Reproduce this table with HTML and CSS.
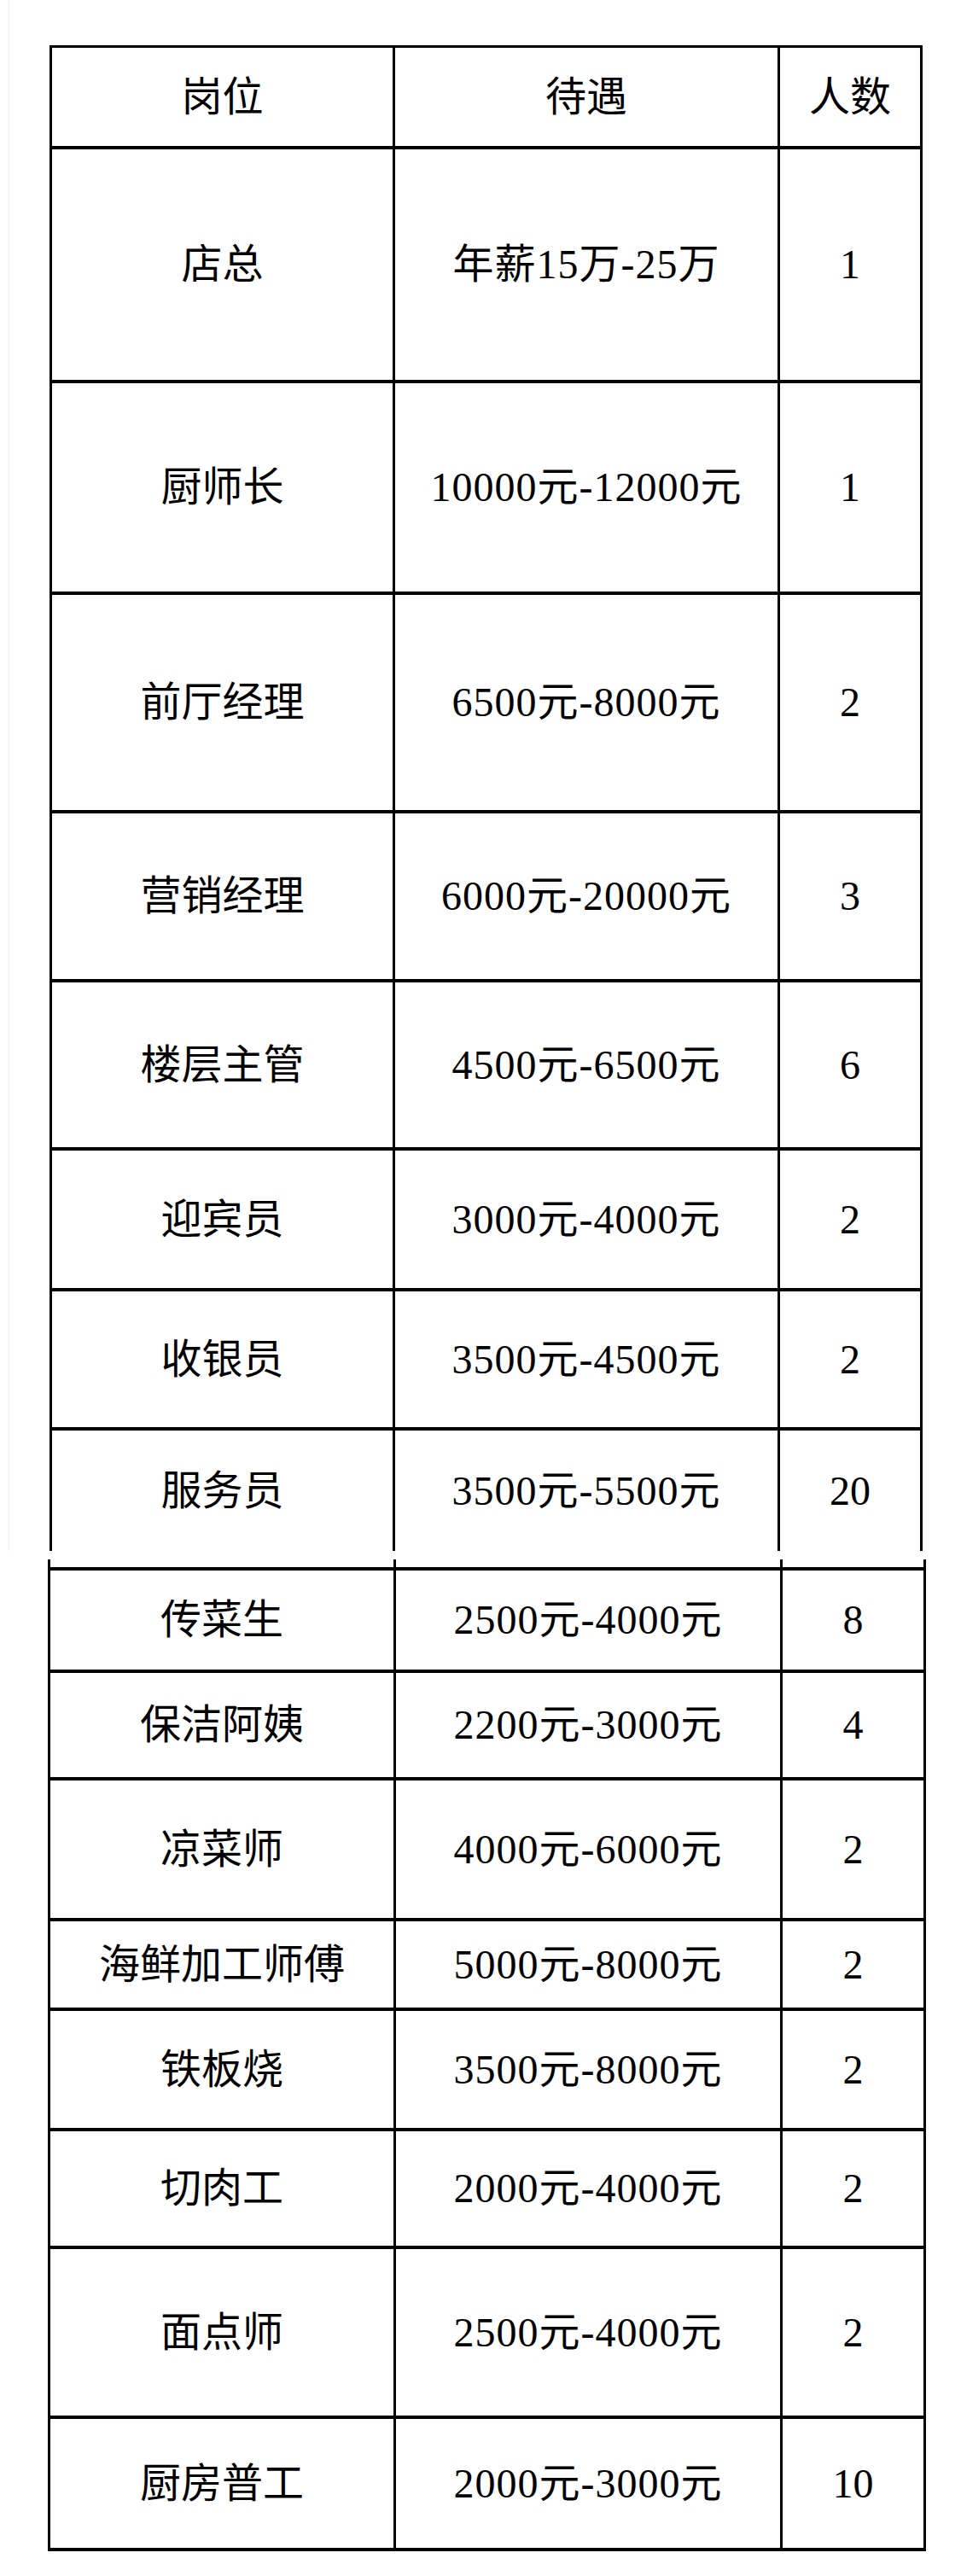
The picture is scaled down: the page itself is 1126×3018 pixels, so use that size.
FILE: index.html
```html
<!DOCTYPE html>
<html lang="zh-CN">
<head>
<meta charset="utf-8">
<title>招聘岗位</title>
<link rel="stylesheet" href="styles.css">
</head>
<body>
<div class="sheet sheet-a">
  <div class="table table-a">
    <div class="row ra0"><div class="cell">岗位</div><div class="cell">待遇</div><div class="cell">人数</div></div>
    <div class="row ra1"><div class="cell">店总</div><div class="cell pay">年薪15万-25万</div><div class="cell">1</div></div>
    <div class="row ra2"><div class="cell">厨师长</div><div class="cell pay">10000元-12000元</div><div class="cell">1</div></div>
    <div class="row ra3"><div class="cell">前厅经理</div><div class="cell pay">6500元-8000元</div><div class="cell">2</div></div>
    <div class="row ra4"><div class="cell">营销经理</div><div class="cell pay">6000元-20000元</div><div class="cell">3</div></div>
    <div class="row ra5"><div class="cell">楼层主管</div><div class="cell pay">4500元-6500元</div><div class="cell">6</div></div>
    <div class="row ra6"><div class="cell">迎宾员</div><div class="cell pay">3000元-4000元</div><div class="cell">2</div></div>
    <div class="row ra7"><div class="cell">收银员</div><div class="cell pay">3500元-4500元</div><div class="cell">2</div></div>
    <div class="row ra8 open"><div class="cell">服务员</div><div class="cell pay">3500元-5500元</div><div class="cell">20</div></div>
  </div>
</div>
<div class="sheet sheet-b">
  <div class="table table-b">
    <div class="row stub"><div class="cell"></div><div class="cell"></div><div class="cell"></div></div>
    <div class="row rb1"><div class="cell">传菜生</div><div class="cell pay">2500元-4000元</div><div class="cell">8</div></div>
    <div class="row rb2"><div class="cell">保洁阿姨</div><div class="cell pay">2200元-3000元</div><div class="cell">4</div></div>
    <div class="row rb3"><div class="cell">凉菜师</div><div class="cell pay">4000元-6000元</div><div class="cell">2</div></div>
    <div class="row rb4"><div class="cell">海鲜加工师傅</div><div class="cell pay">5000元-8000元</div><div class="cell">2</div></div>
    <div class="row rb5"><div class="cell">铁板烧</div><div class="cell pay">3500元-8000元</div><div class="cell">2</div></div>
    <div class="row rb6"><div class="cell">切肉工</div><div class="cell pay">2000元-4000元</div><div class="cell">2</div></div>
    <div class="row rb7"><div class="cell">面点师</div><div class="cell pay">2500元-4000元</div><div class="cell">2</div></div>
    <div class="row rb8"><div class="cell">厨房普工</div><div class="cell pay">2000元-3000元</div><div class="cell">10</div></div>
  </div>
</div>
</body>
</html>
```

FILE: styles.css
```css
html, body {
  margin: 0;
  padding: 0;
  background: #ffffff;
}

body {
  width: 1126px;
  height: 3018px;
  overflow: hidden;
  font-family: "Liberation Serif", "Noto Sans CJK SC", serif;
  font-size: 48px;
  color: #000000;
}

.sheet {
  box-sizing: border-box;
}

.sheet-a {
  height: 1817px;
  margin-left: 10px;
  border-left: 1px solid #f1f1f1;
  padding-top: 53px;
  padding-left: 47px;
}

.sheet-b {
  margin-top: 10px;
  padding-left: 56px;
}

.table {
  box-sizing: border-box;
  border-left: 3px solid #000;
}

.table-a {
  width: 1023px;
  border-top: 3px solid #000;
}

.table-b {
  width: 1029px;
}

.row {
  display: grid;
  box-sizing: border-box;
  border-bottom: 4px solid #000;
}

.table-a .row {
  grid-template-columns: 402px 451px 167px;
}

.table-b .row {
  grid-template-columns: 405px 453px 168px;
}

.row.open {
  border-bottom: none;
}

.cell {
  box-sizing: border-box;
  border-right: 3px solid #000;
  display: flex;
  align-items: center;
  justify-content: center;
  line-height: 1;
  white-space: nowrap;
}

.cell.pay {
  letter-spacing: 1px;
}

/* row heights, block A */
.ra0 { height: 119px; }
.ra1 { height: 274px; }
.ra2 { height: 248px; }
.ra3 { height: 256px; }
.ra4 { height: 198px; }
.ra5 { height: 197px; }
.ra6 { height: 165px; }
.ra7 { height: 163px; }
.ra8 { height: 141px; }

/* row heights, block B */
.stub { height: 13px; }
.rb1 { height: 120px; }
.rb2 { height: 126px; }
.rb3 { height: 165px; }
.rb4 { height: 105px; }
.rb5 { height: 141px; }
.rb6 { height: 138px; }
.rb7 { height: 199px; }
.rb8 { height: 155px; }
```
